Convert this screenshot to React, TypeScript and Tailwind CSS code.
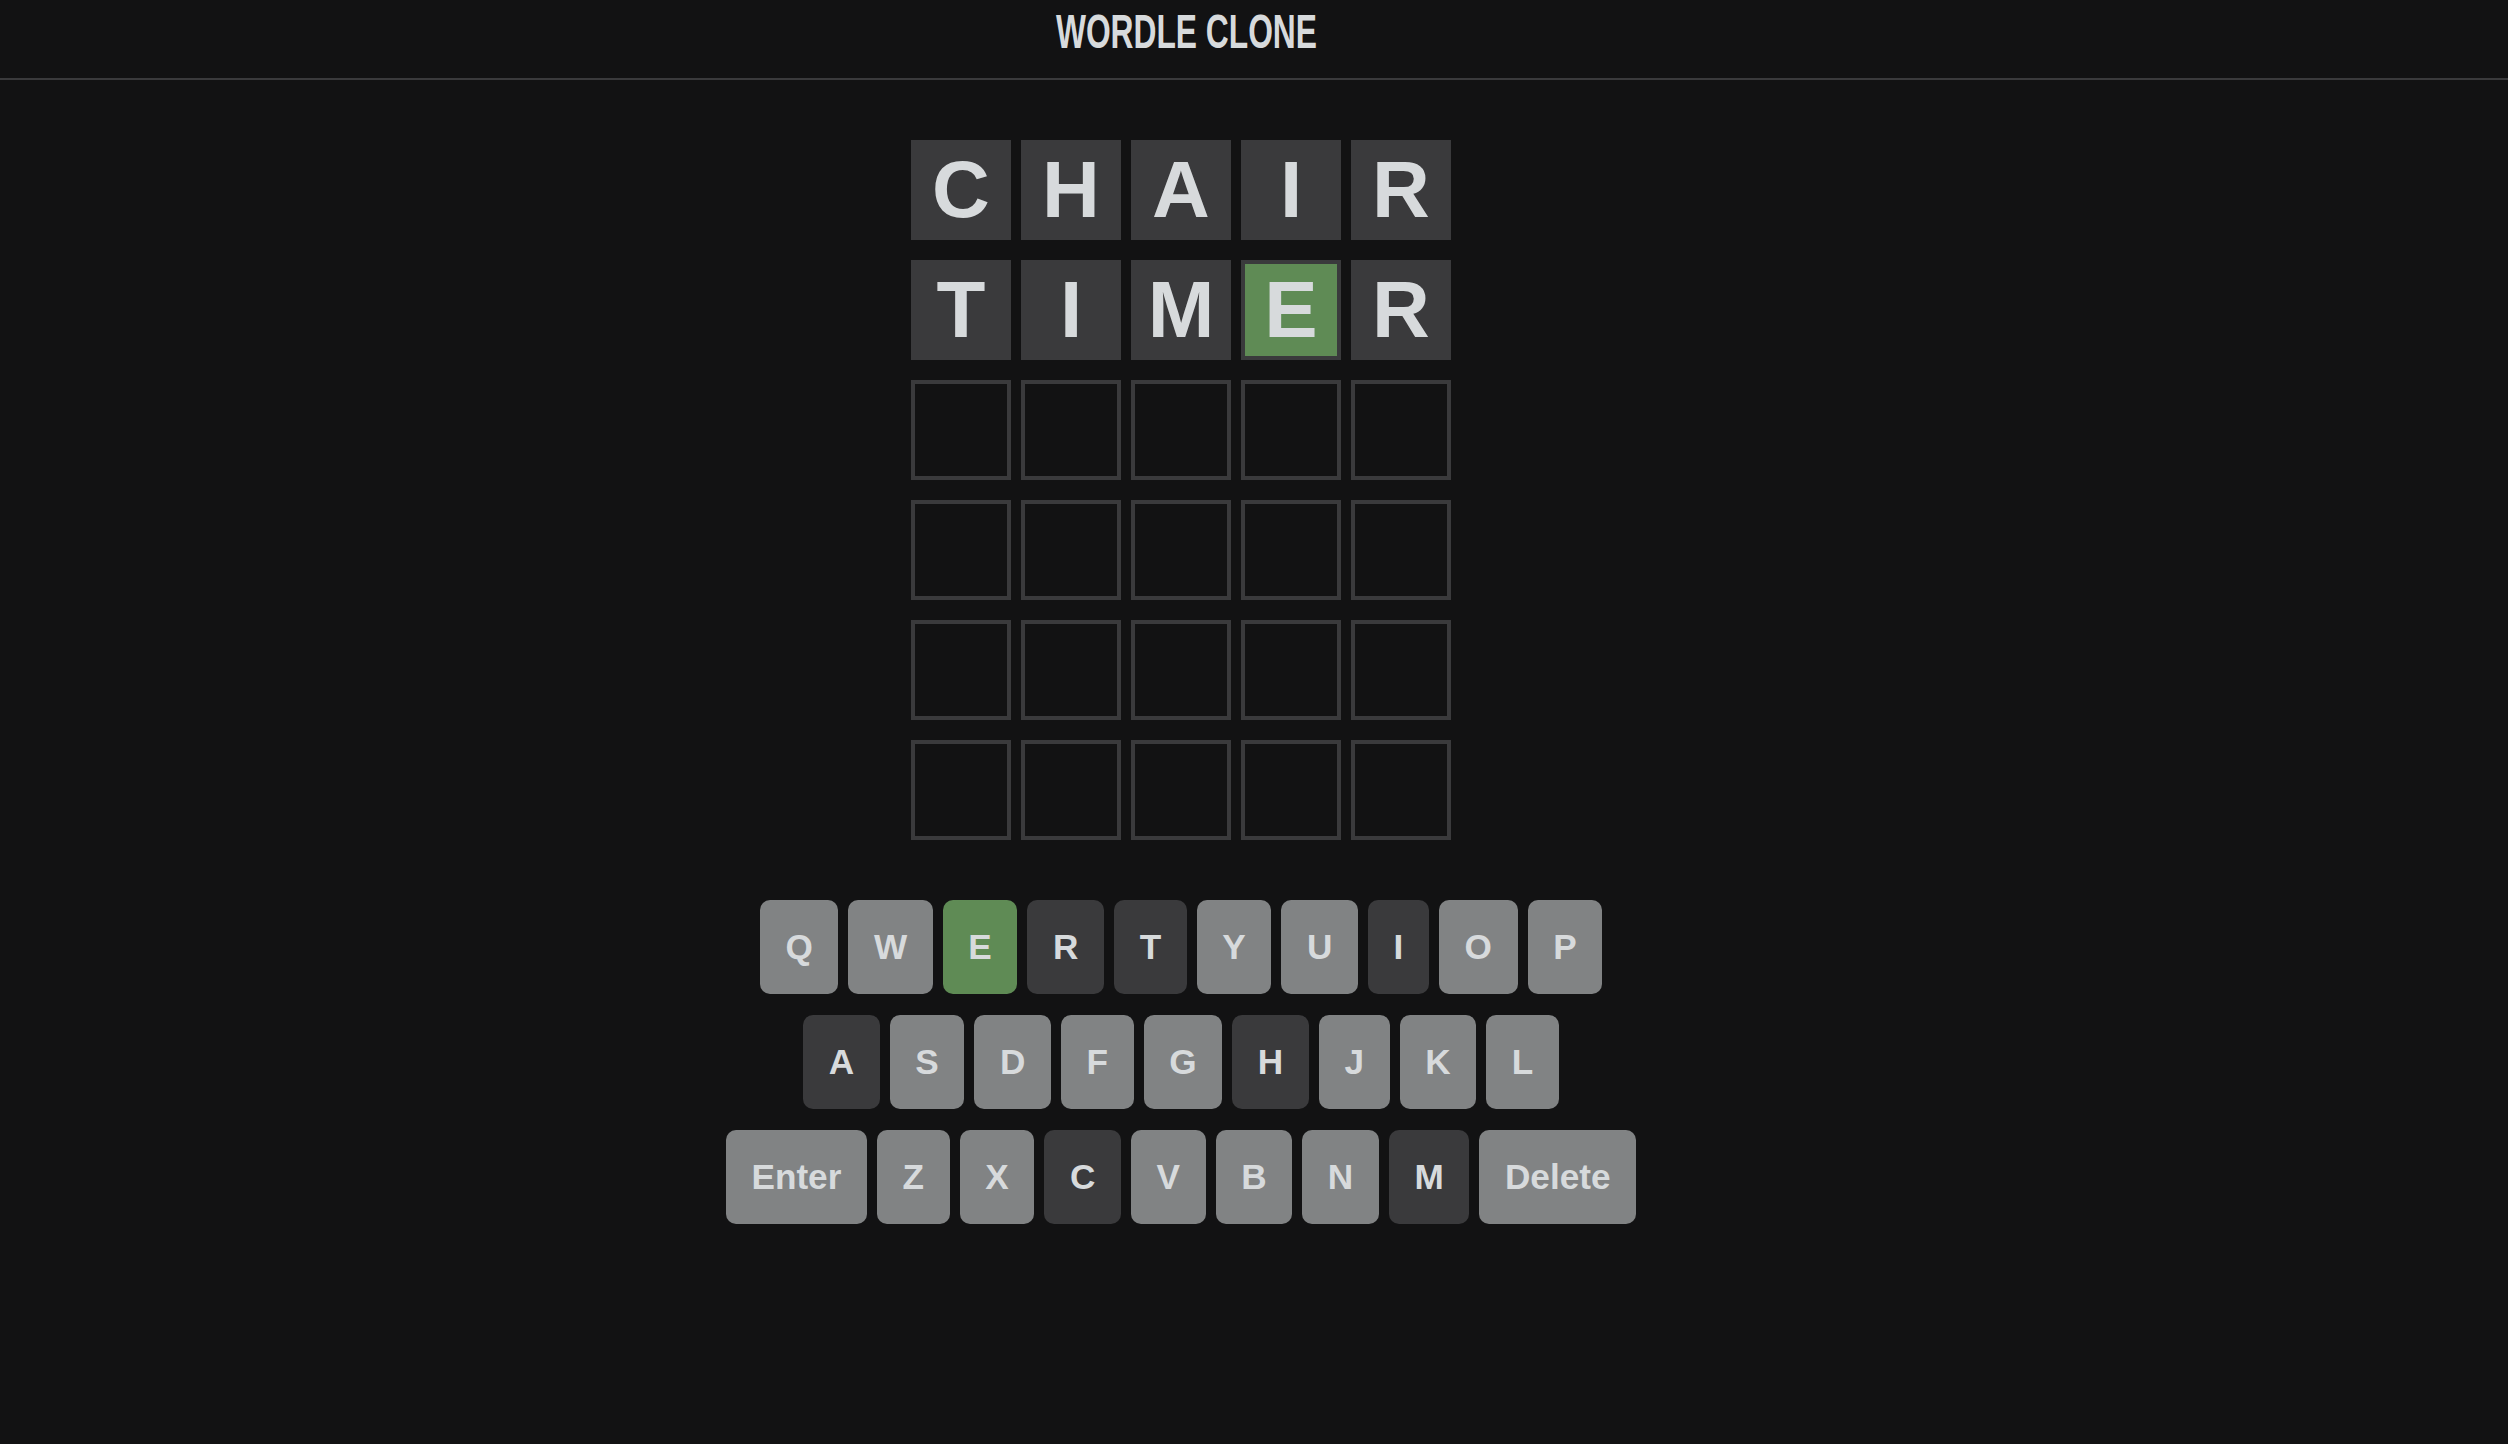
import React from "react";

type State = "green" | "dark" | "gray" | "empty";

const rows: { letter: string; state: State }[][] = [
  [
    { letter: "C", state: "dark" },
    { letter: "H", state: "dark" },
    { letter: "A", state: "dark" },
    { letter: "I", state: "dark" },
    { letter: "R", state: "dark" },
  ],
  [
    { letter: "T", state: "dark" },
    { letter: "I", state: "dark" },
    { letter: "M", state: "dark" },
    { letter: "E", state: "green" },
    { letter: "R", state: "dark" },
  ],
];

const keyRows: { k: string; s: State }[][] = [
  [
    { k: "Q", s: "gray" },
    { k: "W", s: "gray" },
    { k: "E", s: "green" },
    { k: "R", s: "dark" },
    { k: "T", s: "dark" },
    { k: "Y", s: "gray" },
    { k: "U", s: "gray" },
    { k: "I", s: "dark" },
    { k: "O", s: "gray" },
    { k: "P", s: "gray" },
  ],
  [
    { k: "A", s: "dark" },
    { k: "S", s: "gray" },
    { k: "D", s: "gray" },
    { k: "F", s: "gray" },
    { k: "G", s: "gray" },
    { k: "H", s: "dark" },
    { k: "J", s: "gray" },
    { k: "K", s: "gray" },
    { k: "L", s: "gray" },
  ],
  [
    { k: "Enter", s: "gray" },
    { k: "Z", s: "gray" },
    { k: "X", s: "gray" },
    { k: "C", s: "dark" },
    { k: "V", s: "gray" },
    { k: "B", s: "gray" },
    { k: "N", s: "gray" },
    { k: "M", s: "dark" },
    { k: "Delete", s: "gray" },
  ],
];

function Tile({ letter, state }: { letter?: string; state: State }) {
  const bg =
    state === "green"
      ? "bg-[#5f8b55]"
      : state === "dark"
      ? "bg-[#3a3a3c]"
      : "bg-transparent";
  return (
    <div
      className={`w-[100px] h-[100px] border-4 border-[#3a3a3c] ${bg} flex items-center justify-center text-[80px] leading-none font-bold`}
    >
      {letter}
    </div>
  );
}

function Key({ k, s }: { k: string; s: State }) {
  const bg =
    s === "green" ? "bg-[#5f8b55]" : s === "dark" ? "bg-[#3a3a3c]" : "bg-[#818384]";
  return (
    <div
      className={`h-[94px] px-[25.6px] rounded-[10px] ${bg} flex items-center justify-center text-[35.2px] leading-none font-bold`}
    >
      {k}
    </div>
  );
}

export default function App() {
  const allRows = [
    ...rows,
    ...Array.from({ length: 4 }, () =>
      Array.from({ length: 5 }, () => ({ letter: "", state: "empty" as State }))
    ),
  ];
  return (
    <div
      className="min-h-screen bg-[#121213] text-[#d7dadc]"
      style={{ fontFamily: '"Liberation Sans", Arial, Helvetica, sans-serif' }}
    >
      <header className="h-[80px] border-b-2 border-[#3a3a3c] flex justify-center pr-[136px] pt-[7px]">
        <h1 className="text-[49px] leading-none font-bold scale-x-[0.648]">
          WORDLE CLONE
        </h1>
      </header>
      <main className="flex flex-col items-center pr-[146px] pt-[60px]">
        <div className="flex flex-col gap-[20px]">
          {allRows.map((row, i) => (
            <div key={i} className="flex gap-[10px]">
              {row.map((t, j) => (
                <Tile key={j} letter={t.letter} state={t.state} />
              ))}
            </div>
          ))}
        </div>
        <div className="mt-[60px] flex flex-col items-center gap-[21px]">
          {keyRows.map((row, i) => (
            <div key={i} className="flex gap-[10px]">
              {row.map((key) => (
                <Key key={key.k} k={key.k} s={key.s} />
              ))}
            </div>
          ))}
        </div>
      </main>
    </div>
  );
}
